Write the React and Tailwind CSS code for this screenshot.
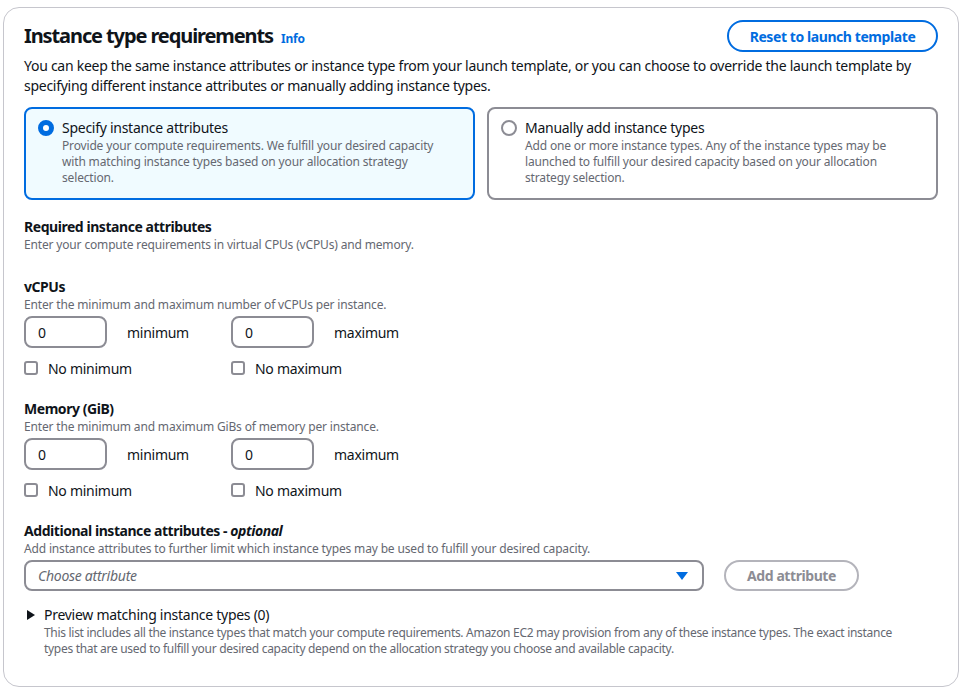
import React from "react";

const font = { fontFamily: '"Noto Sans", "Liberation Sans", sans-serif' };

const NumberField = ({ label }) => (
  <div className="flex items-center">
    <div className="w-[83px] h-[32px] rounded-lg border-2 border-[#8c8c94] flex items-center pl-[12px] text-[14px] text-[#0f141a]">
      0
    </div>
    <span className="ml-[20px] text-[14px] tracking-[-0.27px] text-[#0f141a]">{label}</span>
  </div>
);

const Check = ({ label }) => (
  <div className="flex items-center gap-[10px] h-[20px]">
    <span className="w-[14px] h-[14px] rounded-[3px] border-2 border-[#8c8c94] bg-white" />
    <span className="text-[14px] tracking-[-0.27px] text-[#0f141a]">{label}</span>
  </div>
);

const MinMax = () => (
  <div className="flex flex-col gap-[10px] mt-[3px]">
    <div className="flex">
      <div className="w-[207px]">
        <NumberField label="minimum" />
      </div>
      <NumberField label="maximum" />
    </div>
    <div className="flex">
      <div className="w-[207px]">
        <Check label="No minimum" />
      </div>
      <Check label="No maximum" />
    </div>
  </div>
);

const Tile = ({ selected, title, children }) => (
  <div
    className={
      selected
        ? "flex-1 rounded-lg border-2 border-[#006ce0] bg-[#f0fbff] px-[12px] pt-[9px] pb-[12px] flex gap-[8px]"
        : "flex-1 rounded-lg border-2 border-[#8c8c94] bg-white px-[12px] pt-[9px] pb-[12px] flex gap-[8px]"
    }
  >
    <div className="pt-[2px]">
      {selected ? (
        <span className="block w-[16px] h-[16px] rounded-full border-[5px] border-[#006ce0] bg-white" />
      ) : (
        <span className="block w-[16px] h-[16px] rounded-full border-2 border-[#8c8c94] bg-white" />
      )}
    </div>
    <div>
      <div className="text-[14px] leading-[20px] tracking-[-0.27px] text-[#0f141a]">{title}</div>
      <div className="text-[12px] leading-[16px] tracking-[-0.16px] text-[#656871]">{children}</div>
    </div>
  </div>
);

const Label = ({ children }) => (
  <div className="text-[14px] leading-[20px] font-bold tracking-[-0.45px] text-[#0f141a]">{children}</div>
);

const Hint = ({ children }) => (
  <div className="text-[12px] leading-[16px] tracking-[-0.16px] text-[#656871]">{children}</div>
);

export default function App() {
  return (
    <div className="bg-white w-[966px] h-[693px] pt-[7px] px-[3px]" style={font}>
      <div className="w-[956px] h-[680px] rounded-2xl border border-[#c6c6cd] px-[20px] pt-[12px]">
        <div className="flex items-center justify-between">
          <div className="flex items-baseline gap-[8px]">
            <h1 className="text-[20px] leading-[24px] font-bold tracking-[-1.1px] text-[#0f141a]">
              Instance type requirements
            </h1>
            <span className="text-[12px] font-bold tracking-[-0.2px] text-[#006ce0]">Info</span>
          </div>
          <button className="h-[32px] w-[211px] rounded-full border-2 border-[#006ce0] text-[14px] font-bold tracking-[-0.42px] text-[#006ce0]">
            Reset to launch template
          </button>
        </div>
        <p className="text-[14px] leading-[20px] tracking-[-0.27px] text-[#0f141a] mt-[4px]">
          You can keep the same instance attributes or instance type from your launch template, or you can choose to override the launch template by specifying different instance attributes or manually adding instance types.
        </p>

        <div className="flex gap-[12px] mt-[11px] w-[914px]">
          <Tile selected title="Specify instance attributes">
            Provide your compute requirements. We fulfill your desired capacity
            <br />
            with matching instance types based on your allocation strategy
            <br />
            selection.
          </Tile>
          <Tile title="Manually add instance types">
            Add one or more instance types. Any of the instance types may be
            <br />
            launched to fulfill your desired capacity based on your allocation
            <br />
            strategy selection.
          </Tile>
        </div>

        <div className="mt-[17px]">
          <Label>Required instance attributes</Label>
          <Hint>Enter your compute requirements in virtual CPUs (vCPUs) and memory.</Hint>
        </div>

        <div className="mt-[24px]">
          <Label>vCPUs</Label>
          <Hint>Enter the minimum and maximum number of vCPUs per instance.</Hint>
          <MinMax />
        </div>

        <div className="mt-[21px]">
          <Label>Memory (GiB)</Label>
          <Hint>Enter the minimum and maximum GiBs of memory per instance.</Hint>
          <MinMax />
        </div>

        <div className="mt-[21px]">
          <Label>
            Additional instance attributes - <i>optional</i>
          </Label>
          <Hint>Add instance attributes to further limit which instance types may be used to fulfill your desired capacity.</Hint>
          <div className="flex items-center gap-[20px] mt-[3px]">
            <div className="w-[680px] h-[31px] rounded-lg border-2 border-[#8c8c94] flex items-center justify-between pl-[12px] pr-[14px]">
              <span className="text-[14px] italic tracking-[-0.27px] text-[#656871]">Choose attribute</span>
              <svg width="12" height="8" viewBox="0 0 12 8">
                <path d="M0 0 H12 L6 8 Z" fill="#006ce0" />
              </svg>
            </div>
            <button className="h-[31px] w-[135px] rounded-full border-2 border-[#b4b4bb] text-[14px] font-bold tracking-[-0.42px] text-[#8c8c94]">
              Add attribute
            </button>
          </div>
        </div>

        <div className="mt-[14px] flex gap-[8px]">
          <svg width="12" height="20" viewBox="0 0 12 20" className="shrink-0">
            <path d="M3 5 L11 10 L3 15 Z" fill="#0f141a" />
          </svg>
          <div>
            <div className="text-[14px] leading-[20px] tracking-[-0.27px] text-[#0f141a]">
              Preview matching instance types (0)
            </div>
            <div className="text-[12px] leading-[16px] tracking-[-0.3px] text-[#656871] whitespace-nowrap">
              This list includes all the instance types that match your compute requirements. Amazon EC2 may provision from any of these instance types. The exact instance
              <br />
              types that are used to fulfill your desired capacity depend on the allocation strategy you choose and available capacity.
            </div>
          </div>
        </div>
      </div>
    </div>
  );
}
